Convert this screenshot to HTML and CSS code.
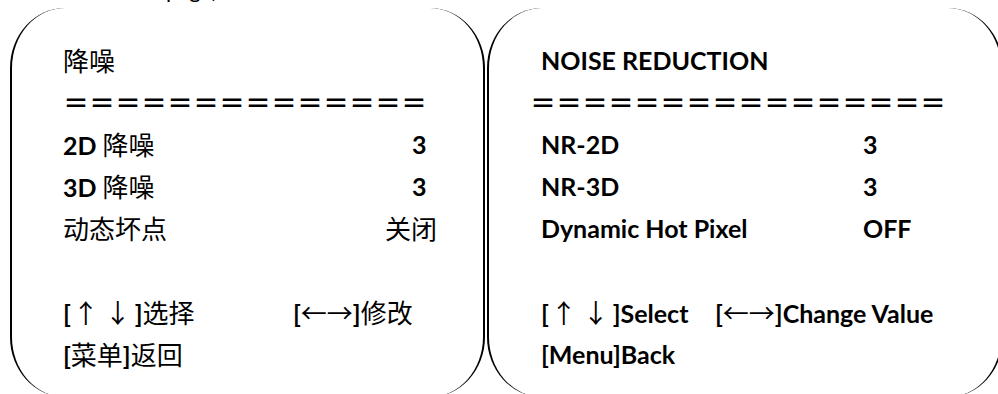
FILE: index.html
```html
<!DOCTYPE html>
<html lang="zh-CN">
<head>
  <meta charset="UTF-8">
  <meta name="viewport" content="width=device-width, initial-scale=1.0">
  <title>Noise Reduction OSD</title>
  <link rel="stylesheet" href="styles.css">
</head>
<body>

<div class="top-note">page)</div>

<div class="menus">
  <div class="osd osd-cn">
    <div class="row"><span class="cn">降噪</span></div>
    <div class="row rule"><span class="cn">＝＝＝＝＝＝＝＝＝＝＝＝＝＝</span></div>
    <div class="row item"><span>2D <span class="cn">降噪</span></span><span class="num">3</span></div>
    <div class="row item"><span>3D <span class="cn">降噪</span></span><span class="num">3</span></div>
    <div class="row item"><span class="cn">动态坏点</span><span class="cn">关闭</span></div>
    <div class="row"></div>
    <div class="row keys">
      <span class="key">[<span class="cn arrows">↑ ↓</span>]<span class="cn">选择</span></span>
      <span>[<span class="cn">←→</span>]<span class="cn">修改</span></span>
    </div>
    <div class="row">[<span class="cn">菜单</span>]<span class="cn">返回</span></div>
  </div>

  <div class="osd osd-en">
    <div class="row">NOISE REDUCTION</div>
    <div class="row rule"><span class="cn">＝＝＝＝＝＝＝＝＝＝＝＝＝＝＝＝</span></div>
    <div class="row item"><span>NR-2D</span><span>3</span></div>
    <div class="row item"><span>NR-3D</span><span>3</span></div>
    <div class="row item"><span>Dynamic Hot Pixel</span><span>OFF</span></div>
    <div class="row"></div>
    <div class="row keys">
      <span class="key">[<span class="cn arrows">↑ ↓</span>]Select</span>
      <span>[<span class="cn">←→</span>]Change Value</span>
    </div>
    <div class="row">[Menu]Back</div>
  </div>
</div>

</body>
</html>
```

FILE: styles.css
```css
body {
  margin: 0;
  font-family: Lato, "Noto Sans CJK SC", sans-serif;
  font-weight: 700;
  font-size: 25px;
  color: #000;
  background-color: #fff;
  overflow: hidden;
}

.cn {
  font-family: "Noto Sans CJK SC", sans-serif;
  font-size: 26px;
  font-weight: 400;
}

.top-note {
  height: 24px;
  line-height: 24px;
  margin-top: -22px;
  padding-left: 166px;
  font-size: 22px;
  font-weight: 400;
}

.menus {
  display: flex;
  margin-top: 6px;
  padding-left: 10px;
}

/* screen shaped like a bracket pair: sides only, big round corners */
.osd {
  flex: none;
  box-sizing: border-box;
  height: 389px;
  padding-top: 31px;
  border-left: 2px solid #000;
  border-right: 2px solid #000;
  border-radius: 55px / 60px;
}

.osd-cn {
  width: 475px;
  padding-left: 51px;
}

.osd-en {
  width: 516px;
  margin-left: 2px;
  padding-left: 52px;
}

.row {
  height: 42px;
  line-height: 42px;
  white-space: nowrap;
}

.item {
  display: grid;
  grid-template-columns: 322px auto;
}

.num {
  padding-left: 27px;
}

.rule .cn {
  font-weight: 700;
}

.osd-en .rule {
  margin-left: -11px;
}

.arrows {
  margin: 0 4px 0 2px;
}

.keys {
  display: flex;
}

.osd-cn .key {
  width: 230px;
}

.osd-en .key {
  width: 174px;
}
```
